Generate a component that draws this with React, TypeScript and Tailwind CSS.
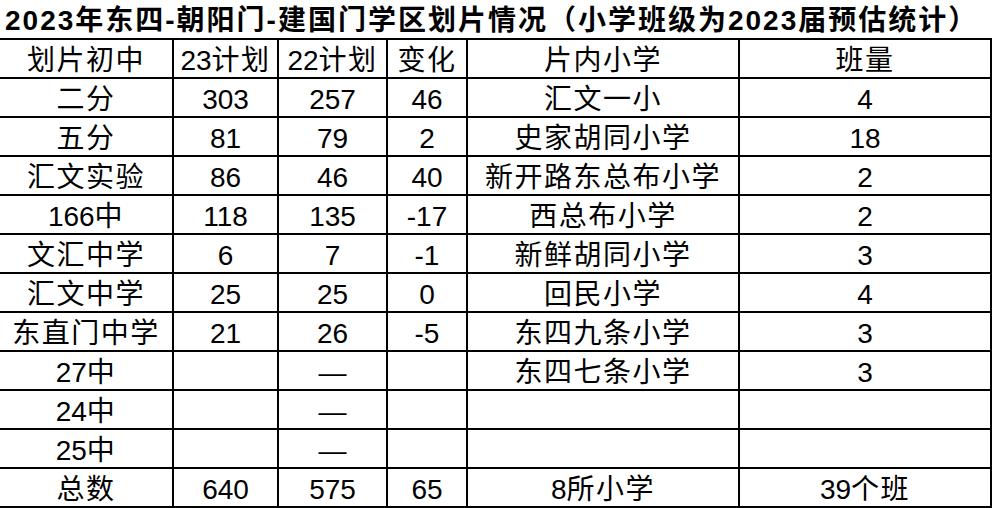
import React from "react";

const rows: string[][] = [
  ["划片初中", "23计划", "22计划", "变化", "片内小学", "班量"],
  ["二分", "303", "257", "46", "汇文一小", "4"],
  ["五分", "81", "79", "2", "史家胡同小学", "18"],
  ["汇文实验", "86", "46", "40", "新开路东总布小学", "2"],
  ["166中", "118", "135", "-17", "西总布小学", "2"],
  ["文汇中学", "6", "7", "-1", "新鲜胡同小学", "3"],
  ["汇文中学", "25", "25", "0", "回民小学", "4"],
  ["东直门中学", "21", "26", "-5", "东四九条小学", "3"],
  ["27中", "", "—", "", "东四七条小学", "3"],
  ["24中", "", "—", "", "", ""],
  ["25中", "", "—", "", "", ""],
  ["总数", "640", "575", "65", "8所小学", "39个班"],
];

function Runs({ text }: { text: string }) {
  const parts = text.match(/[\u4e00-\u9fff\uff00-\uffef]+|[^\u4e00-\u9fff\uff00-\uffef]+/g) || [];
  return (
    <>
      {parts.map((p, i) =>
        /[\u4e00-\u9fff\uff00-\uffef]/.test(p) ? (
          <span key={i} className="tracking-[1.5px]">
            {p}
          </span>
        ) : (
          <span key={i}>{p}</span>
        )
      )}
    </>
  );
}

export default function App() {
  return (
    <div
      className="w-[992px] h-[508px] bg-white text-black overflow-hidden"
      style={{ fontFamily: '"Liberation Sans", "Noto Sans CJK SC", sans-serif' }}
    >
      <div className="h-[38px] pl-[5px] pt-[4px] flex items-center text-[28px] font-bold leading-none whitespace-nowrap tracking-[2px]">
        2023年东四-朝阳门-建国门学区划片情况（小学班级为2023届预估统计）
      </div>
      <div className="grid grid-cols-[174px_105px_109px_80px_272px_252px] border-t-2 border-black">
        {rows.map((r, i) =>
          r.map((c, j) => (
            <div
              key={`${i}-${j}`}
              className="h-[39px] pt-[4px] border-b-2 border-r-2 border-black flex items-center justify-center text-[28px] leading-none whitespace-nowrap"
            >
              <Runs text={c} />
            </div>
          ))
        )}
      </div>
    </div>
  );
}
